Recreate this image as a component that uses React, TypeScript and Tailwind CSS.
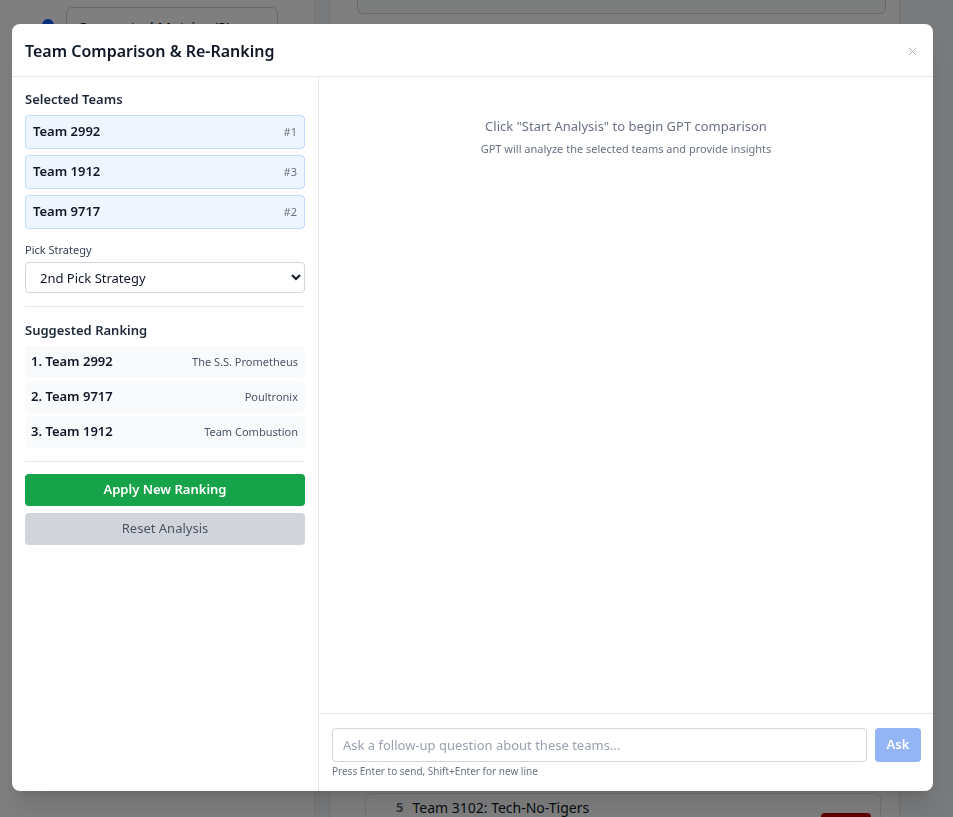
import { X } from 'lucide-react'

const selected = [
  { team: 'Team 2992', rank: '#1' },
  { team: 'Team 1912', rank: '#3' },
  { team: 'Team 9717', rank: '#2' },
]

const ranking = [
  { label: '1. Team 2992', name: 'The S.S. Prometheus' },
  { label: '2. Team 9717', name: 'Poultronix' },
  { label: '3. Team 1912', name: 'Team Combustion' },
]

const font = { fontFamily: '"Segoe UI", "Noto Sans", "Open Sans", sans-serif' }

function BackgroundPage() {
  return (
    <div className="h-screen overflow-hidden bg-gray-100 flex">
      {/* sidebar */}
      <aside className="w-[315px] shrink-0 bg-white border-r border-gray-200 pt-[7px] pl-[42px]">
        <div className="flex items-start gap-3">
          <div className="w-3 h-3 rounded-full bg-blue-600 mt-[12px]" />
          <div className="w-[212px] h-[40px] border border-gray-300 rounded-md bg-white flex items-center justify-between px-3 text-[15px] text-gray-900">
            <span>Suggested Metrics (3)</span>
            <span className="text-xs">▼▲</span>
          </div>
        </div>
      </aside>
      <div className="w-[15px] shrink-0 border-r border-gray-200" />
      {/* main */}
      <main className="w-[570px] shrink-0 border-r border-gray-200 bg-white flex flex-col">
        <div className="ml-[27px] w-[529px] h-[14px] border border-t-0 border-gray-300 rounded-b-md bg-gray-50" />
        <div className="flex-1" />
        <div className="ml-[35px] w-[516px] h-[24px] border border-b-0 border-gray-200 rounded-t-md bg-white flex items-start pt-[4px]">
          <span className="ml-[30px] text-[13px] font-bold text-gray-500">5</span>
          <span className="ml-[9px] text-[14px] leading-5 text-gray-900">Team 3102: Tech-No-Tigers</span>
          <span className="ml-auto mr-[9px] mt-[15px] w-[50px] h-[10px] rounded-t bg-red-700" />
        </div>
      </main>
    </div>
  )
}

export default function App() {
  return (
    <div style={font} className="relative">
      <BackgroundPage />
      <div className="fixed inset-0 bg-black/50" />
      <div className="absolute left-[12px] top-[24px] w-[921px] h-[767px] bg-white rounded-lg shadow-xl flex flex-col overflow-hidden">
        {/* header */}
        <div className="h-[53px] shrink-0 border-b border-gray-200 flex items-center justify-between pl-[13px] pr-[14px] pt-[2px]">
          <h2 className="text-[16px] font-semibold text-gray-900">Team Comparison &amp; Re-Ranking</h2>
          <X size={13} strokeWidth={1.5} className="text-gray-400" />
        </div>

        <div className="flex flex-1 min-h-0">
          {/* left panel */}
          <div className="w-[307px] shrink-0 border-r border-gray-200 p-[13px]">
            <h3 className="text-[13px] leading-[18px] font-semibold text-gray-800 mb-[7px]">Selected Teams</h3>
            <div className="flex flex-col gap-[6px]">
              {selected.map(s => (
                <div key={s.team} className="h-[34px] flex items-center justify-between px-[7px] bg-[#eff6ff] border border-[#bfdbfe] rounded">
                  <span className="text-[13px] font-semibold text-gray-900">{s.team}</span>
                  <span className="text-[11px] text-gray-500">{s.rank}</span>
                </div>
              ))}
            </div>

            <label className="block mt-[13px] mb-1 text-[11px] leading-4 text-gray-700">Pick Strategy</label>
            <select defaultValue="2nd" className="w-full h-[31px] border border-gray-300 rounded px-[10px] text-[13px] text-gray-900 bg-white">
              <option value="1st">1st Pick Strategy</option>
              <option value="2nd">2nd Pick Strategy</option>
            </select>

            <div className="border-t border-gray-200 mt-[13px] pt-[14px]">
              <h3 className="text-[13px] leading-[18px] font-semibold text-gray-800 mb-[7px]">Suggested Ranking</h3>
              <div className="flex flex-col gap-[3px]">
                {ranking.map(r => (
                  <div key={r.label} className="h-[32px] flex items-center justify-between pl-[6px] pr-[7px] bg-[#f9fafb] rounded">
                    <span className="text-[13px] font-semibold text-gray-900">{r.label}</span>
                    <span className="text-[11px] text-gray-600">{r.name}</span>
                  </div>
                ))}
              </div>
            </div>

            <div className="border-t border-gray-200 mt-[13px] pt-[12px] flex flex-col gap-[7px]">
              <button className="h-[32px] w-full rounded bg-[#16a34a] text-white text-[13px] font-semibold">Apply New Ranking</button>
              <button className="h-[32px] w-full rounded bg-[#d1d5db] text-gray-600 text-[13px]">Reset Analysis</button>
            </div>
          </div>

          {/* right panel */}
          <div className="flex-1 flex flex-col min-w-0">
            <div className="flex-1 pt-[40px] text-center">
              <p className="text-[13px] leading-[18px] text-gray-500">Click "Start Analysis" to begin GPT comparison</p>
              <p className="mt-[6px] text-[11px] leading-4 text-gray-500">GPT will analyze the selected teams and provide insights</p>
            </div>
            <div className="border-t border-gray-200 pt-[14px] pb-[13px] pl-[13px] pr-[12px]">
              <div className="flex gap-2">
                <input
                  placeholder="Ask a follow-up question about these teams..."
                  className="flex-1 h-[34px] border border-gray-300 rounded px-[10px] text-[13px] placeholder:text-gray-400"
                />
                <button className="w-[46px] h-[34px] rounded bg-[#93b4f5] text-white text-[13px] font-semibold">Ask</button>
              </div>
              <p className="mt-[2px] text-[10px] leading-[14px] text-gray-500">Press Enter to send, Shift+Enter for new line</p>
            </div>
          </div>
        </div>
      </div>
    </div>
  )
}
